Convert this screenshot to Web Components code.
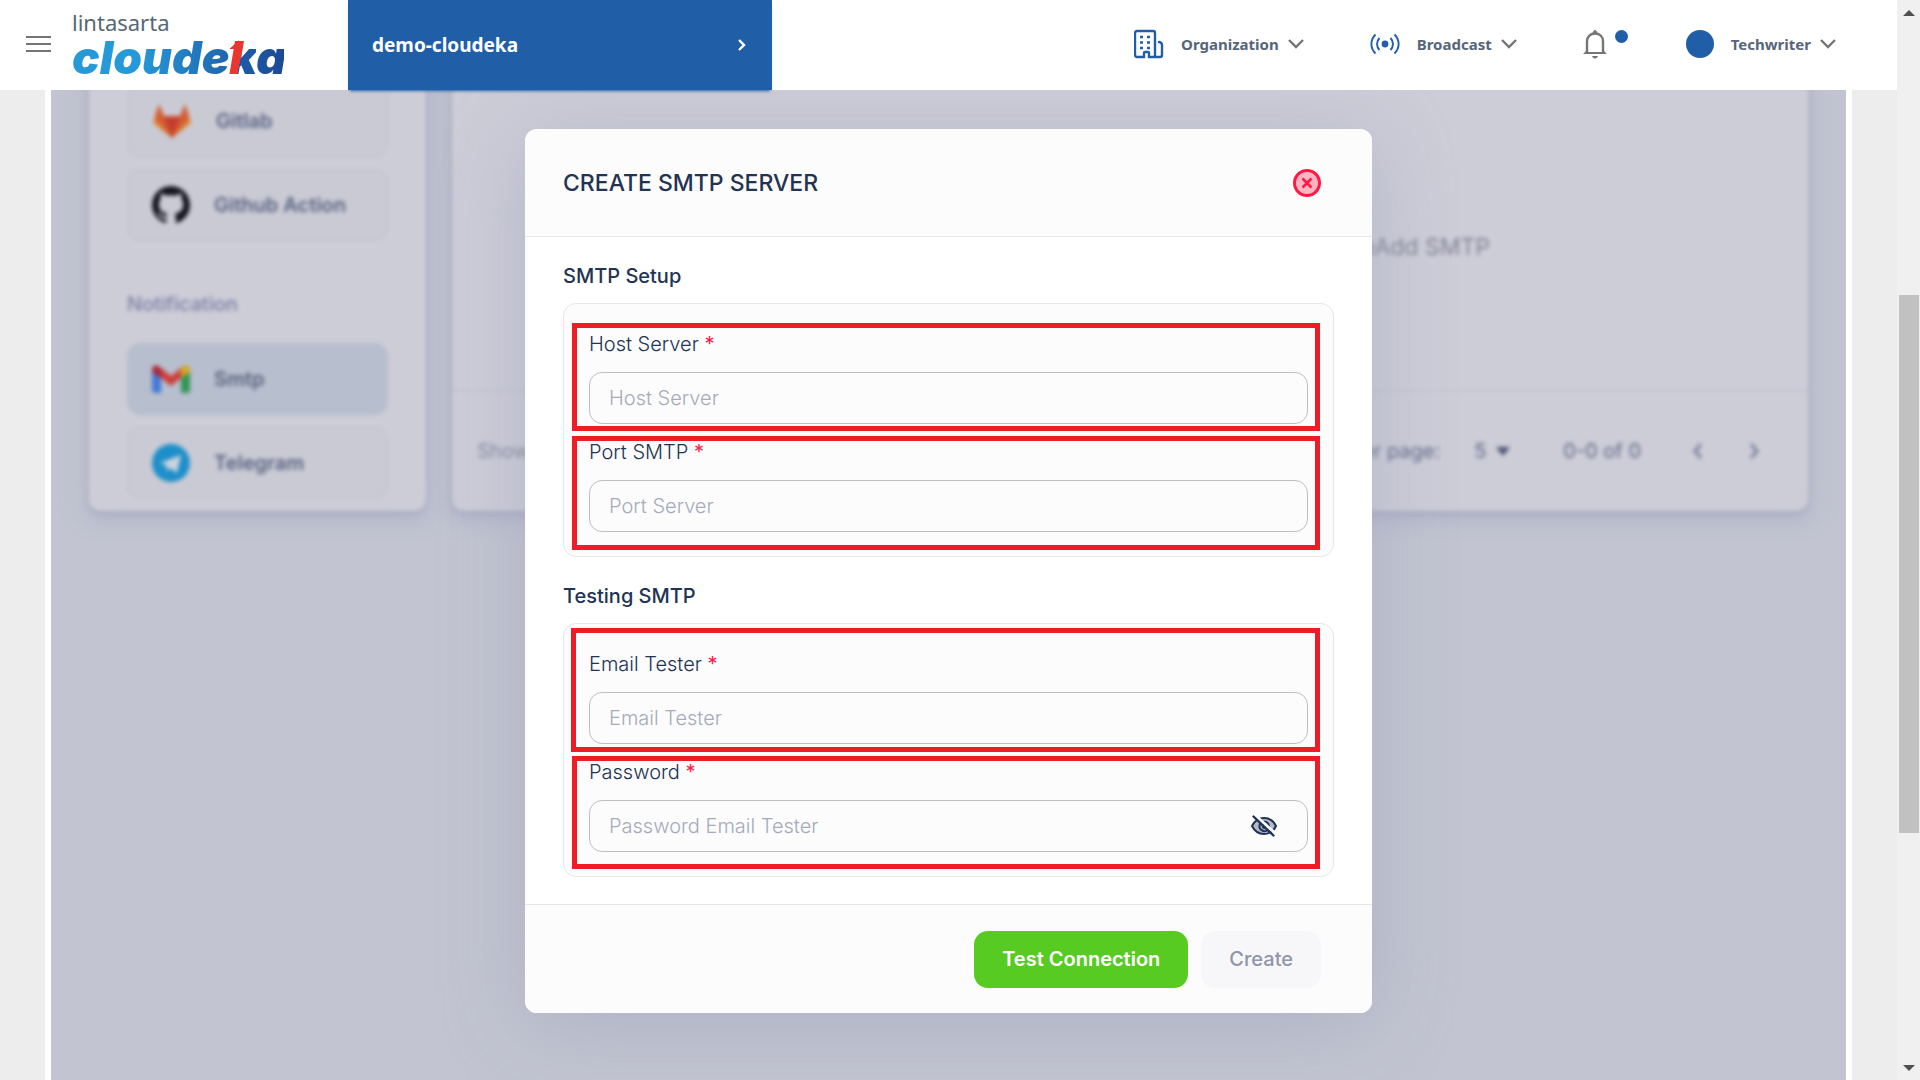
<!DOCTYPE html>
<html lang="en">
<head>
<meta charset="utf-8">
<title>Cloudeka - Create SMTP Server</title>
<style>
  body {
    margin: 0;
    font-family: Inter, "Liberation Sans", sans-serif;
    color: #223354;
  }
</style>
</head>
<body>
<cloudeka-app></cloudeka-app>

<script>
"use strict";

// shared base: every element clones its own template into an open shadow root
class BaseElement extends HTMLElement {
  constructor() {
    super();
    const template = document.createElement("template");
    template.innerHTML = this.template();
    this.attachShadow({ mode: "open" });
    this.shadowRoot.appendChild(template.content);
  }

  // elements that read attributes fill their text in here
  setText(selector, name) {
    this.shadowRoot.querySelector(selector).textContent = this.getAttribute(name) || "";
  }
}

// logo
class CloudekaLogo extends BaseElement {
  template() {
    return `
    <style>
      :host { display: block; width: 212px; }
      a { display: block; padding-top: 2px; text-decoration: none; }
      .parent {
        display: block;
        font: 400 22px/24px "Noto Sans", sans-serif;
        color: #566676;
      }
      .brand {
        display: block;
        font: italic 900 46px/46px Inter, sans-serif;
        color: transparent;
        background: linear-gradient(90deg, #2699d8 0 30%, #1b4896 100%);
        background-clip: text;
        -webkit-background-clip: text;
        white-space: nowrap;
      }
      .k {
        position: relative;
        background: linear-gradient(102deg, #e9362e 0 46%, #1d57a5 46%);
        background-clip: text;
        -webkit-background-clip: text;
      }
      /* flag that turns the red stem into a 1 */
      .k::before {
        content: "";
        position: absolute;
        top: 11px;
        left: 0;
        width: 10px;
        height: 9px;
        background: #e9362e;
        clip-path: polygon(100% 0, 100% 100%, 0 100%);
      }
    </style>
    <a href="#">
      <span class="parent">lintasarta</span>
      <span class="brand">cloude<span class="k">k</span>a</span>
    </a>`;
  }
}
customElements.define("cloudeka-logo", CloudekaLogo);

// dropdown entry of the top bar
class NavMenu extends BaseElement {
  template() {
    return `
    <style>
      :host { display: block; }
      button {
        display: flex;
        align-items: center;
        padding: 0;
        border: 0;
        background: none;
        cursor: pointer;
        font: 700 15px/24px "Noto Sans", sans-serif;
        color: #56657a;
      }
      ::slotted(svg) { display: block; }
      .label { margin: 0 9px 0 17px; }
      .arrow { display: block; }
    </style>
    <button type="button">
      <slot></slot>
      <span class="label"></span>
      <svg class="arrow" width="16" height="10" viewBox="0 0 16 10" fill="none" stroke="#757575" stroke-width="2.400"><path d="M1 1l7 7 7-7"/></svg>
    </button>`;
  }

  connectedCallback() {
    this.setText(".label", "label");
  }
}
customElements.define("nav-menu", NavMenu);

class AppHeader extends BaseElement {
  template() {
    return `
    <style>
      :host {
        display: flex;
        align-items: center;
        position: relative;
        z-index: 2;
        box-sizing: border-box;
        height: 90px;
        padding: 0 61px 2px 26px;
        background: #fff;
      }
      button { padding: 0; border: 0; background: none; cursor: pointer; }
      svg { display: block; }
      cloudeka-logo { margin: 0 64px 0 21px; }
      .project {
        display: flex;
        align-items: center;
        justify-content: space-between;
        align-self: stretch;
        width: 424px;
        margin-bottom: -2px;
        padding: 0 25px 0 24px;
        background: #205fa8;
        box-shadow: 0 3px 3px -2px #205fa8;
        font: 700 19px/24px "Noto Sans", sans-serif;
        color: #fff;
      }
      nav {
        display: flex;
        align-items: center;
        gap: 66px;
        margin-left: auto;
      }
      .bell { position: relative; width: 37px; }
      .badge {
        position: absolute;
        top: 0;
        right: -8px;
        width: 13px;
        height: 13px;
        border-radius: 50%;
        background: #205fa8;
      }
    </style>
    <button type="button" aria-label="Menu">
      <svg width="25" height="18" viewBox="0 0 25 18" fill="#757575"><path d="M0 1h25v2H0zM0 8h25v2H0zM0 15h25v2H0z"/></svg>
    </button>
    <cloudeka-logo></cloudeka-logo>
    <button type="button" class="project">
      <span>demo-cloudeka</span>
      <svg width="10" height="14" viewBox="0 0 10 14" fill="none" stroke="#fff" stroke-width="2.400"><path d="M2 2l5 5-5 5"/></svg>
    </button>
    <nav>
      <nav-menu label="Organization">
        <svg width="30" height="30" viewBox="0 0 30 30" fill="none" stroke="#205fa8" stroke-width="2.400">
          <path d="M8 28H3a2 2 0 0 1-2-2V4a2 2 0 0 1 2-2h16a2 2 0 0 1 2 2v24h-6v-4a1 1 0 0 0-1-1h-3a1 1 0 0 0-1 1v4H8M21 28h5a2 2 0 0 0 2-2V16a3 3 0 0 0-3-3" stroke-linecap="round"/>
          <path d="M6 8h3M13 8h3M6 13.500h3M13 13.500h3M6 19h3M13 19h3"/>
        </svg>
      </nav-menu>
      <nav-menu label="Broadcast">
        <svg width="30" height="22" viewBox="0 0 30 22" fill="none" stroke="#205fa8" stroke-width="1.900">
          <circle cx="15" cy="11" r="3.400" fill="#205fa8" stroke="none"/>
          <path d="M5.500 1.500C0 7 0 15 5.500 20.500M24.500 1.500C30 7 30 15 24.500 20.500M9.500 5c-3.300 3.500-3.300 8.500 0 12M20.500 5c3.300 3.500 3.300 8.500 0 12"/>
        </svg>
      </nav-menu>
      <button type="button" class="bell" aria-label="Notifications">
        <svg width="24" height="29" viewBox="0 0 24 29">
          <path d="M4 23V11.500C4 6.500 7.500 3.500 12 3.500s8 3 8 8V23" fill="none" stroke="#757575" stroke-width="2.400"/>
          <path d="M0 24l3-3v1h18v-1l3 3zM9.500 3.500C10 1.500 11 0 12 0s2 1.500 2.500 3.500zM9 26h6c-.5 1.500-1.500 2.500-3 2.500S9.500 27.500 9 26z" fill="#757575"/>
        </svg>
        <span class="badge"></span>
      </button>
      <nav-menu label="Techwriter">
        <svg width="28" height="28" viewBox="0 0 28 28"><circle cx="14" cy="14" r="14" fill="#205fa8"/></svg>
      </nav-menu>
    </nav>`;
  }
}
customElements.define("app-header", AppHeader);

// one integration in the sidebar
class SideItem extends BaseElement {
  template() {
    return `
    <style>
      :host { display: block; }
      a {
        display: flex;
        align-items: center;
        gap: 24px;
        box-sizing: border-box;
        height: 72px;
        padding: 0 24px;
        border: 1px solid #c1c1ce;
        border-radius: 13px;
        background: #cacad5;
        font-size: 20px;
        line-height: 24px;
        font-weight: 600;
        color: #56617f;
        text-decoration: none;
      }
      :host([active]) a { background: #b7becd; border-color: #b7becd; }
    </style>
    <a href="#"><slot></slot><span></span></a>`;
  }

  connectedCallback() {
    this.setText("span", "label");
  }
}
customElements.define("side-item", SideItem);

// dimmed page behind the dialog
class SettingsPage extends BaseElement {
  template() {
    return `
    <style>
      :host {
        display: flex;
        align-items: flex-start;
        gap: 26px;
        margin: -40px 38px 0 38px;
        filter: blur(2px);
      }
      .card {
        box-sizing: border-box;
        border-radius: 12px;
        background: #cdcdd8;
        box-shadow: 0 9px 16px rgba(159, 162, 191, .4), 0 2px 4px rgba(130, 132, 165, .35), 0 0 26px rgba(170, 180, 200, .5);
      }
      .side {
        display: flex;
        flex-direction: column;
        gap: 12px;
        flex: 0 0 337px;
        padding: 35px 38px 12px;
      }
      h3 {
        margin: 39px 0 15px;
        font-size: 20px;
        line-height: 24px;
        font-weight: 500;
        color: #7c7ea4;
      }
      .list { flex: 1; }
      .empty {
        display: flex;
        align-items: center;
        justify-content: flex-end;
        box-sizing: border-box;
        height: 340px;
        max-width: 720px;
        margin: 0 auto;
        padding-top: 54px;
        font-size: 23px;
        line-height: 32px;
        color: #828395;
      }
      .pager {
        display: flex;
        align-items: center;
        height: 120px;
        padding: 0 44px 0 25px;
        border-top: 1px solid #bcbccb;
        font-size: 20px;
        line-height: 24px;
        color: #5f6784;
      }
      .show { margin-right: auto; color: #85889f; }
      select {
        appearance: none;
        width: 22px;
        margin: 0 0 0 34px;
        padding: 0;
        border: 0;
        background: none;
        font: inherit;
        color: inherit;
      }
      .range { margin: 0 47px 0 53px; }
      .pager button { margin: 0 0 0 36px; padding: 0; border: 0; background: none; }
      .range + button { margin: 0; }
      svg { display: block; }
    </style>
    <aside class="card side">
      <side-item label="Gitlab">
        <svg width="40" height="38" viewBox="0 0 40 38">
          <path d="M20 36L1 21 6 4l6 11h16l6-11 5 17z" fill="#df8430"/>
          <path d="M20 36L3 16 7 2l5 12h16l5-12 4 14z" fill="#d35c35"/>
          <path d="M20 36l-8-21h16z" fill="#c53d2f"/>
        </svg>
      </side-item>
      <side-item label="Github Action">
        <svg width="38" height="38" viewBox="0 0 16 16" fill="#14141f"><path d="M8 0C3.580 0 0 3.580 0 8c0 3.540 2.290 6.530 5.470 7.590.4.070.55-.17.55-.38 0-.19-.01-.82-.01-1.490-2.010.37-2.530-.49-2.690-.94-.09-.23-.48-.94-.82-1.130-.28-.15-.68-.52-.01-.53.63-.01 1.080.58 1.230.82.72 1.210 1.870.87 2.330.66.070-.52.280-.87.510-1.070-1.780-.2-3.640-.89-3.640-3.950 0-.87.310-1.590.82-2.150-.08-.2-.36-1.020.08-2.120 0 0 .67-.21 2.200.82a7.600 7.600 0 0 1 4 0c1.530-1.040 2.200-.82 2.200-.82.44 1.100.16 1.920.08 2.120.51.56.82 1.270.82 2.150 0 3.070-1.870 3.750-3.650 3.950.29.25.54.73.54 1.480 0 1.070-.01 1.930-.01 2.200 0 .21.150.46.550.38A8 8 0 0 0 16 8c0-4.420-3.580-8-8-8z"/></svg>
      </side-item>
      <h3>Notification</h3>
      <side-item label="Smtp" active>
        <svg width="38" height="28" viewBox="0 0 38 28">
          <path d="M0 5v20a3 3 0 0 0 3 3h6V10z" fill="#4379d6"/>
          <path d="M38 5v20a3 3 0 0 1-3 3h-6V10z" fill="#2f9556"/>
          <path d="M9 3l10 8 10-8v10l-10 8-10-8z" fill="#cc3e3a"/>
          <path d="M0 5c0-4 4-6 7-3l2 1v10L0 7z" fill="#ab2739"/>
          <path d="M38 5c0-4-4-6-7-3l-2 1v10l9-6z" fill="#d6a61f"/>
        </svg>
      </side-item>
      <side-item label="Telegram">
        <svg width="38" height="38" viewBox="0 0 38 38"><circle cx="19" cy="19" r="19" fill="#1d8fca"/><path d="M8 19l21-8-4 18-7-5-3 3-1-6z" fill="#cdd3df"/></svg>
      </side-item>
    </aside>
    <section class="card list">
      <div class="empty">eAdd SMTP</div>
      <div class="pager">
        <span class="show">Show</span>
        <label for="rows">Rows per page:</label>
        <select id="rows"><option>5</option></select>
        <svg width="14" height="9" viewBox="0 0 14 9" fill="#4a5272"><path d="M0 0h14L7 9z"/></svg>
        <span class="range">0-0 of 0</span>
        <button type="button" aria-label="Previous page"><svg width="20" height="16" viewBox="0 0 20 16" fill="none" stroke="#7b8099" stroke-width="3"><path d="M13 1L7 8l6 7"/></svg></button>
        <button type="button" aria-label="Next page"><svg width="20" height="16" viewBox="0 0 20 16" fill="none" stroke="#7b8099" stroke-width="3"><path d="M7 1l6 7-6 7"/></svg></button>
      </div>
    </section>`;
  }
}
customElements.define("settings-page", SettingsPage);

// titled group of fields
class FormSection extends BaseElement {
  template() {
    return `
    <style>
      :host { display: block; }
      h3 {
        margin: 0 0 15px;
        font-size: 20px;
        line-height: 24px;
        font-weight: 500;
      }
      .box {
        display: flex;
        flex-direction: column;
        gap: 16px;
        padding: 28px 25px 24px;
        border: 1px solid #e5e6ec;
        border-radius: 13px;
        background: #fcfcfc;
      }
    </style>
    <h3></h3>
    <div class="box"><slot></slot></div>`;
  }

  connectedCallback() {
    this.setText("h3", "heading");
  }
}
customElements.define("form-section", FormSection);

// label + input, with the red guide frame drawn over it
class FormField extends BaseElement {
  template() {
    return `
    <style>
      :host { display: block; position: relative; }
      label {
        display: block;
        margin-bottom: 16px;
        font-size: 20px;
        line-height: 24px;
        font-weight: 300;
      }
      i { font-style: normal; font-weight: 400; color: #ff1a4a; }
      .control {
        display: flex;
        align-items: center;
        box-sizing: border-box;
        height: 52px;
        padding: 0 29px 0 19px;
        border: 1px solid #bfbfc1;
        border-radius: 13px;
      }
      input {
        flex: 1;
        min-width: 0;
        padding: 0;
        border: 0;
        outline: 0;
        background: none;
        font: 300 20px/24px Inter, sans-serif;
        color: #223354;
      }
      input::placeholder { color: #a4abbb; opacity: 1; }
      .frame {
        position: absolute;
        inset: var(--frame);
        border: 5px solid #ee1c25;
        pointer-events: none;
      }
    </style>
    <label for="field"><span></span> <i>*</i></label>
    <div class="control"><input id="field"><slot></slot></div>
    <div class="frame"></div>`;
  }

  connectedCallback() {
    const input = this.shadowRoot.querySelector("input");
    this.setText("span", "label");
    input.type = this.getAttribute("type") || "text";
    input.placeholder = this.getAttribute("placeholder");
  }
}
customElements.define("form-field", FormField);

class SmtpDialog extends BaseElement {
  template() {
    return `
    <style>
      :host {
        display: block;
        width: 100%;
        max-width: 847px;
        margin: 39px auto 67px;
        border-radius: 12px;
        background: #fff;
        box-shadow: 0 12px 80px rgba(150, 155, 180, .45);
        overflow: hidden;
      }
      header, footer {
        display: flex;
        align-items: center;
        padding: 0 51px 0 38px;
        background: #fcfcfc;
      }
      header {
        justify-content: space-between;
        height: 107px;
        border-bottom: 1px solid #e6e7ec;
      }
      h2 {
        margin: 0;
        font-size: 23px;
        line-height: 32px;
        font-weight: 500;
      }
      form {
        display: flex;
        flex-direction: column;
        gap: 27px;
        padding: 27px 38px;
      }
      footer {
        justify-content: flex-end;
        gap: 13px;
        height: 108px;
        border-top: 1px solid #e6e7ec;
      }
      button { padding: 0; border: 0; background: none; cursor: pointer; }
      svg { display: block; }
      footer button {
        height: 57px;
        padding: 0 28px;
        border-radius: 14px;
        font: 500 20px/24px Inter, sans-serif;
      }
      .test { background: #57cb22; color: #fff; font-weight: 600; }
      .create { background: #f7f7f9; color: #8e96a8; }
    </style>
    <header>
      <h2>CREATE SMTP SERVER</h2>
      <button type="button" aria-label="Close">
        <svg width="28" height="28" viewBox="0 0 28 28" stroke="#ff1a43"><circle cx="14" cy="14" r="12.500" fill="#ffb5c3" stroke-width="3"/><path d="M9.500 9.500l9 9M18.500 9.500l-9 9" stroke-width="2.600"/></svg>
      </button>
    </header>
    <form>
      <form-section heading="SMTP Setup">
        <form-field label="Host Server" placeholder="Host Server" style="--frame: -9px -12px -7px -17px"></form-field>
        <form-field label="Port SMTP" placeholder="Port Server" style="--frame: -4px -12px -18px -17px"></form-field>
      </form-section>
      <form-section heading="Testing SMTP">
        <form-field label="Email Tester" placeholder="Email Tester" style="--frame: -24px -12px -8px -18px"></form-field>
        <form-field label="Password" type="password" placeholder="Password Email Tester" style="--frame: -4px -12px -17px -17px">
          <button type="button" aria-label="Show password">
            <svg width="28" height="24" viewBox="0 0 28 24" fill="none" stroke="#1f3154" stroke-width="2" stroke-linecap="round">
              <path d="M2 12c2.500-5 7-8 12-8s9.500 3 12 8c-2.500 5-7 8-12 8S4.500 17 2 12z" fill="#b3b9c6"/>
              <path d="M10 10a5 5 0 0 0 7 6.500M14 7.500a5 5 0 0 1 5 4.500M13 11a2 2 0 0 0 2 3"/>
              <path d="M6 2l20 18" stroke="#fcfcfc" stroke-width="3"/>
              <path d="M3.500 2.500l20 19" stroke-width="2.400"/>
            </svg>
          </button>
        </form-field>
      </form-section>
    </form>
    <footer>
      <button type="button" class="test">Test Connection</button>
      <button type="button" class="create">Create</button>
    </footer>`;
  }
}
customElements.define("smtp-dialog", SmtpDialog);

// classic window scrollbar
class PageScrollbar extends BaseElement {
  template() {
    return `
    <style>
      :host {
        display: grid;
        grid-template-rows: 23px 272fr 538fr 224fr 23px;
        background: #f0f0f0;
      }
      button {
        display: grid;
        place-items: center;
        padding: 2px 0 0 1px;
        border: 0;
        background: none;
      }
      .thumb { grid-row: 3; margin: 0 1px 0 2px; background: #c1c1c1; }
      .down { grid-row: 5; padding: 0 0 2px 1px; }
    </style>
    <button type="button" aria-label="Scroll up"><svg width="12" height="6" viewBox="0 0 12 6" fill="#505050"><path d="M0 6l6-6 6 6z"/></svg></button>
    <div class="thumb"></div>
    <button type="button" class="down" aria-label="Scroll down"><svg width="12" height="6" viewBox="0 0 12 6" fill="#505050"><path d="M0 0l6 6 6-6z"/></svg></button>`;
  }
}
customElements.define("page-scrollbar", PageScrollbar);

class CloudekaApp extends BaseElement {
  template() {
    return `
    <style>
      :host {
        display: grid;
        grid-template-columns: 1fr 23px;
        min-height: 100vh;
        background: #ededed;
      }
      .page { display: flex; flex-direction: column; }
      main {
        display: grid;
        flex: 1;
        align-items: start;
        margin: 0 45px;
        border: solid #fff;
        border-width: 0 6px;
        background: #c2c4d1;
        overflow: hidden;
      }
      /* the dialog sits in the same cell as the page it covers */
      main > * { grid-area: 1 / 1; }
      smtp-dialog { z-index: 1; }
    </style>
    <div class="page">
      <app-header></app-header>
      <main>
        <settings-page></settings-page>
        <smtp-dialog role="dialog" aria-label="Create SMTP server"></smtp-dialog>
      </main>
    </div>
    <page-scrollbar></page-scrollbar>`;
  }
}
customElements.define("cloudeka-app", CloudekaApp);
</script>
</body>
</html>
